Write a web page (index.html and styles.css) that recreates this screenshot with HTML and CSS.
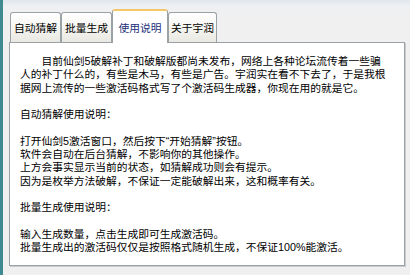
FILE: index.html
```html
<!DOCTYPE html>
<html lang="zh-CN">
<head>
    <meta charset="UTF-8">
    <title>仙剑5激活码生成器</title>
    <link rel="stylesheet" href="styles.css">
</head>
<body>
    <div class="window">
        <div class="tabs">
            <div class="tab tab-auto">自动猜解</div>
            <div class="tab tab-batch">批量生成</div>
            <div class="tab tab-help active">使用说明</div>
            <div class="tab tab-about">关于宇润</div>
        </div>

        <div class="panel">
            <p class="help-text">
                <span class="line">　　目前仙剑5破解补丁和破解版都尚未发布，网络上各种论坛流传着一些骗</span>
                <span class="line">人的补丁什么的，有些是木马，有些是广告。宇润实在看不下去了，于是我根</span>
                <span class="line">据网上流传的一些激活码格式写了个激活码生成器，你现在用的就是它。</span>
                <span class="line blank"></span>
                <span class="line">自动猜解使用说明：</span>
                <span class="line blank"></span>
                <span class="line">打开仙剑5激活窗口，然后按下“开始猜解”按钮。</span>
                <span class="line">软件会自动在后台猜解，不影响你的其他操作。</span>
                <span class="line">上方会事实显示当前的状态，如猜解成功则会有提示。</span>
                <span class="line">因为是枚举方法破解，不保证一定能破解出来，这和概率有关。</span>
                <span class="line blank"></span>
                <span class="line">批量生成使用说明：</span>
                <span class="line blank"></span>
                <span class="line">输入生成数量，点击生成即可生成激活码。</span>
                <span class="line">批量生成出的激活码仅仅是按照格式随机生成，不保证100%能激活。</span>
            </p>
        </div>
    </div>
</body>
</html>
```

FILE: styles.css
```css
body {
    margin: 0;
    width: 410px;
    height: 275px;
    overflow: hidden;
    background: linear-gradient(#dfe6ee 0, #eef0f2 6px, #f0f0f0 20px);
    font-family: "Liberation Sans", "Noto Sans CJK SC", sans-serif;
    color: #000;
}

.window {
    height: 275px;
    box-sizing: border-box;
    border-left: 3px solid #3f8a90;
    padding-left: 6px;
}

.tabs {
    display: flex;
    align-items: flex-end;
    height: 33px;
    padding-top: 9px;
    margin-left: 1px;
}

.tab {
    box-sizing: border-box;
    height: 30px;
    display: flex;
    align-items: center;
    justify-content: center;
    font-size: 10.75px;
    border: 1px solid #9aa2a6;
    border-bottom: none;
    border-radius: 3px 3px 0 0;
    background: linear-gradient(#ffffff, #f3f3ef 60%, #e9e8e2);
}

.tab-auto { width: 51px; }
.tab-batch { width: 51px; }
.tab-help { width: 56px; }
.tab-about { width: 49px; }

.tab.active {
    position: relative;
    z-index: 1;
    height: 34px;
    margin-bottom: -1px;
    background: #fff;
    color: #23307a;
    border-top: 2px solid #f3c66a;
}

.panel {
    box-sizing: border-box;
    width: 396px;
    height: 224px;
    background: #fff;
    border: 1px solid #9aa2a6;
    box-shadow: 1px 1px 0 #c9cbcc;
    padding: 12px 0 0 10px;
}

.help-text {
    margin: 0;
    font-size: 10.75px;
    line-height: 13.3px;
    white-space: nowrap;
}

.line {
    display: block;
}

.line.blank {
    height: 13.3px;
}
```
